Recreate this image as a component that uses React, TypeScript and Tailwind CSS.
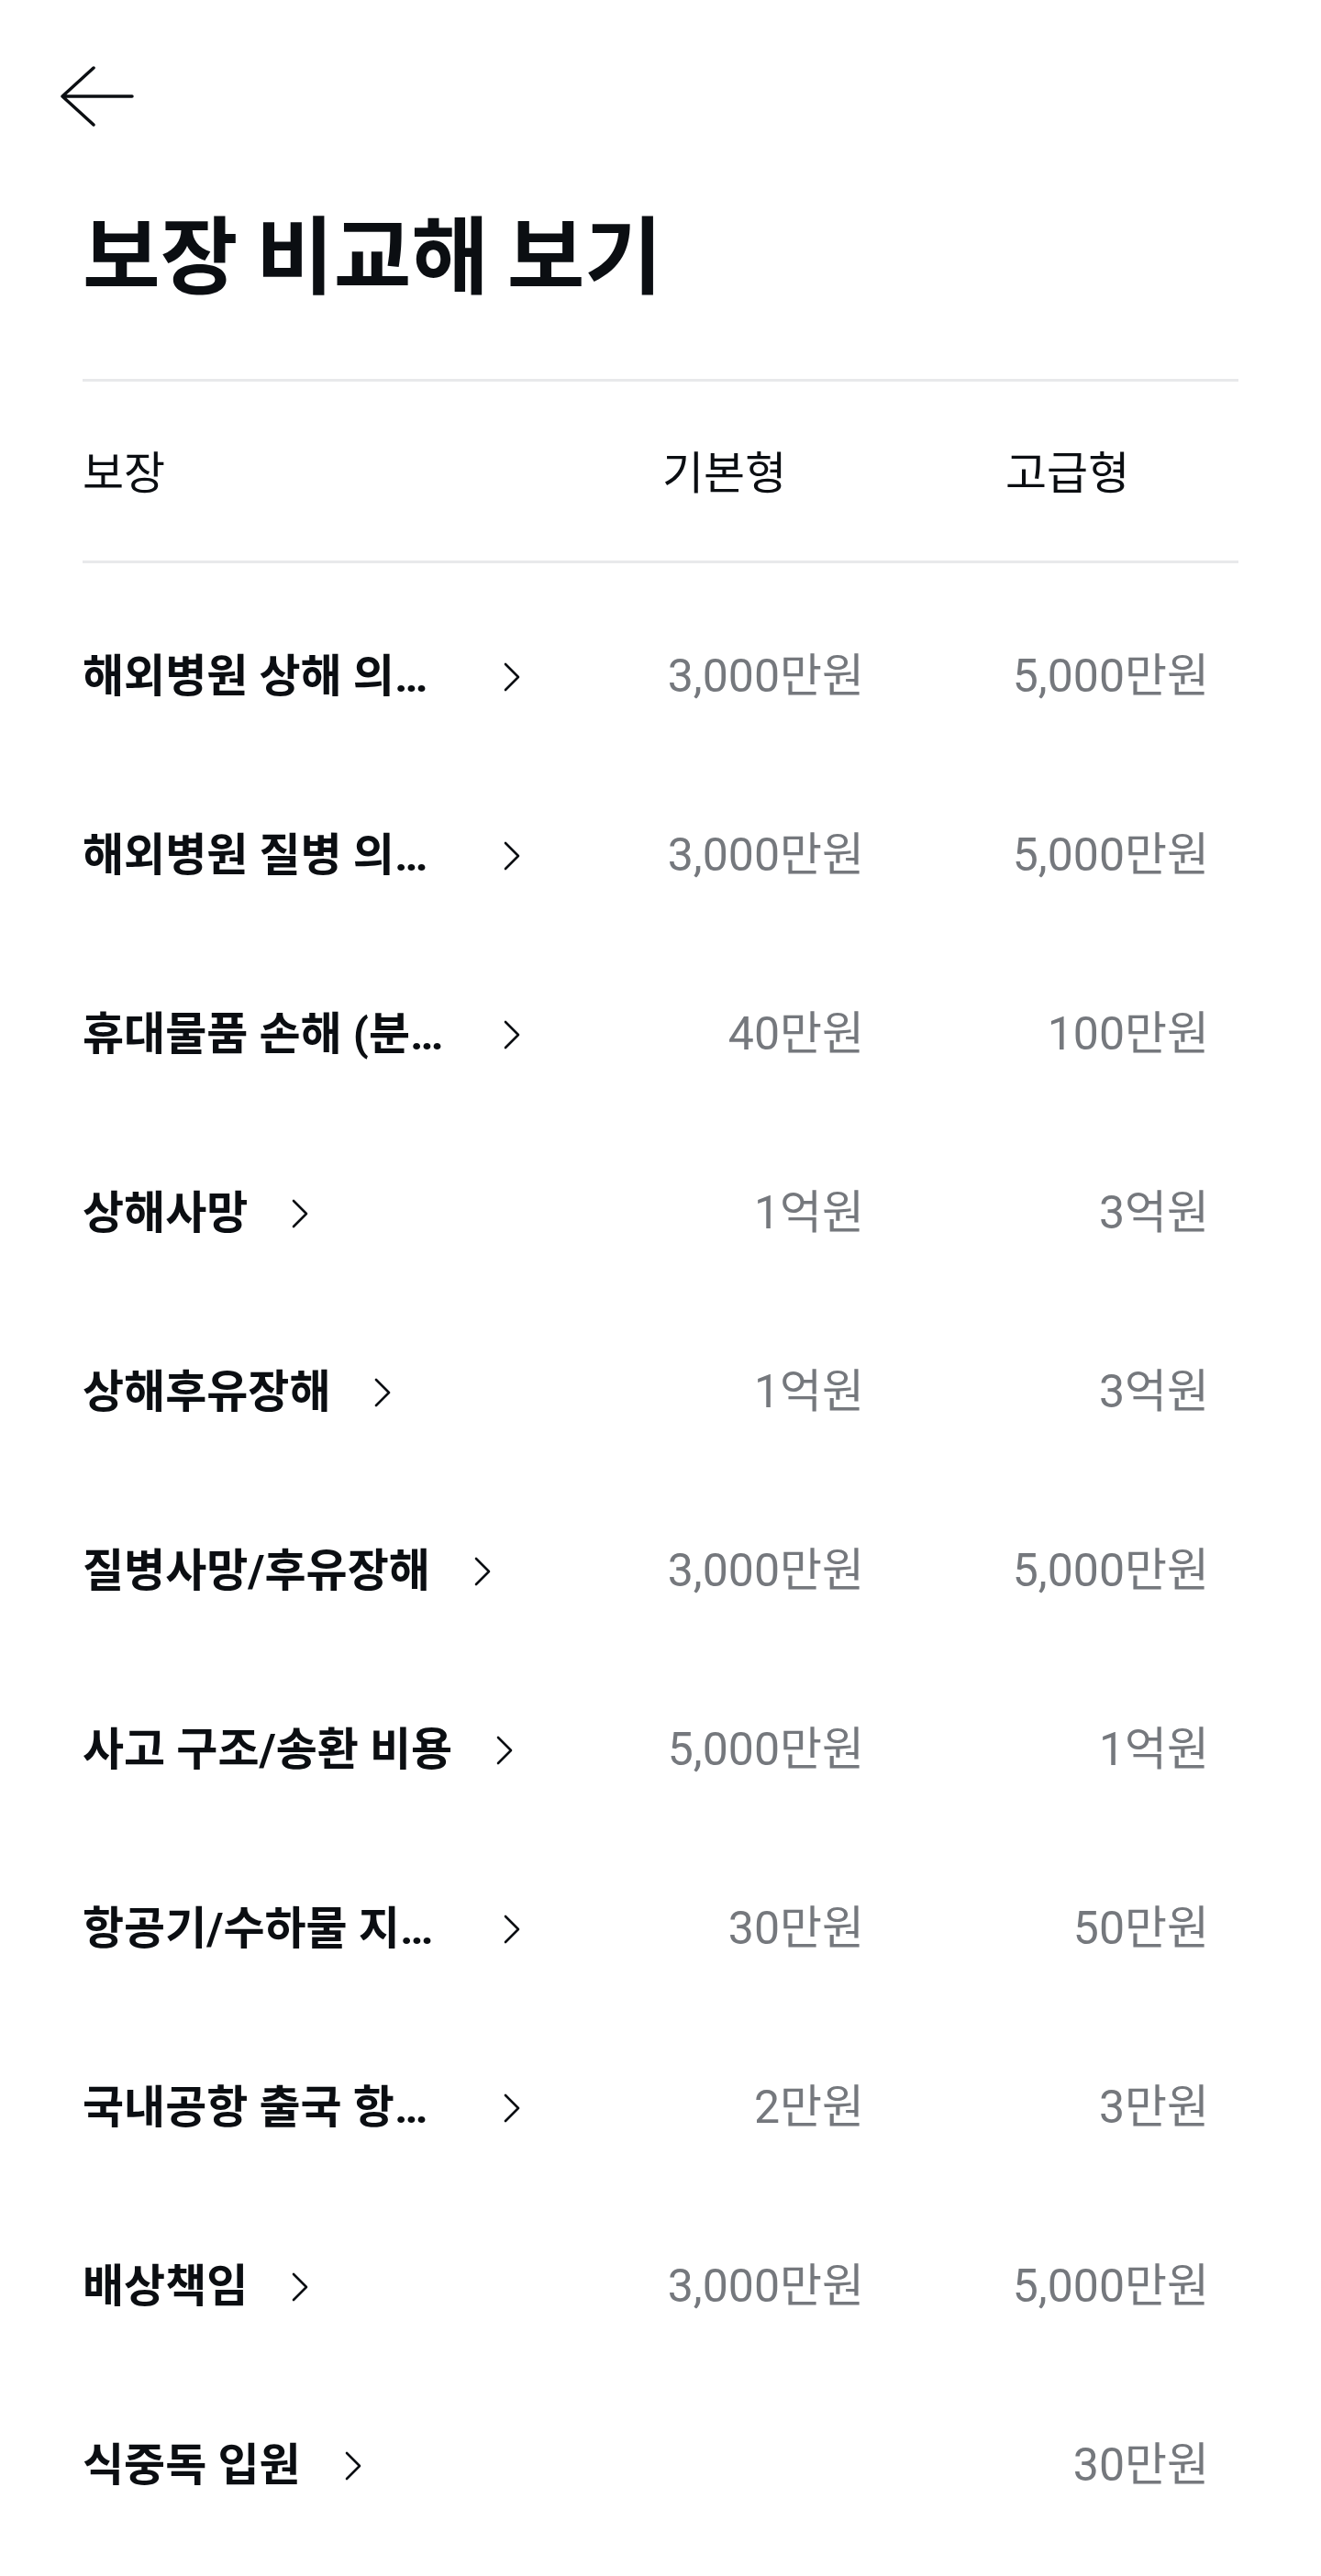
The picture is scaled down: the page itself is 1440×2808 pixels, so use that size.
import React from "react";

type Coverage = {
  name: string;
  basic: string;
  premium: string;
};

const coverages: Coverage[] = [
  { name: "해외병원 상해 의료비", basic: "3,000만원", premium: "5,000만원" },
  { name: "해외병원 질병 의료비", basic: "3,000만원", premium: "5,000만원" },
  { name: "휴대물품 손해 (분실 제외)", basic: "40만원", premium: "100만원" },
  { name: "상해사망", basic: "1억원", premium: "3억원" },
  { name: "상해후유장해", basic: "1억원", premium: "3억원" },
  { name: "질병사망/후유장해", basic: "3,000만원", premium: "5,000만원" },
  { name: "사고 구조/송환 비용", basic: "5,000만원", premium: "1억원" },
  { name: "항공기/수하물 지연 비용", basic: "30만원", premium: "50만원" },
  { name: "국내공항 출국 항공기 지연", basic: "2만원", premium: "3만원" },
  { name: "배상책임", basic: "3,000만원", premium: "5,000만원" },
  { name: "식중독 입원", basic: "", premium: "30만원" },
];

function BackArrow() {
  return (
    <svg width="80" height="66" viewBox="0 0 80 66" fill="none">
      <path
        d="M2 33H78M36 2L2 33L36 64"
        stroke="#0b0e12"
        strokeWidth="3.5"
        strokeLinecap="round"
        strokeLinejoin="round"
      />
    </svg>
  );
}

function Chevron() {
  return (
    <svg width="18" height="32" viewBox="0 0 18 32" fill="none" className="shrink-0">
      <path d="M2 2L16 16L2 30" stroke="#0b0e12" strokeWidth="2.6" strokeLinecap="round" strokeLinejoin="round" />
    </svg>
  );
}

export default function App() {
  return (
    <div lang="ko" className="w-[1440px] min-h-[2808px] bg-white text-[#0b0e12] font-['Roboto','Noto_Sans_CJK_KR',sans-serif]">
      <header className="pl-[66px] pt-[72px]">
        <button className="block">
          <BackArrow />
        </button>
      </header>

      <main className="px-[90px]">
        <h1 className="mt-[89px] text-[92px] leading-none font-bold font-['Noto_Sans_CJK_KR',sans-serif] [word-spacing:-6px]">
          보장 비교해 보기
        </h1>

        <div className="mt-[94px] h-[3px] bg-[#e8e9eb]" />
        <div className="flex h-[195px] items-center pb-[4px] pr-[32px] text-[49px] font-['Noto_Sans_CJK_KR',sans-serif]">
          <div className="flex-1">보장</div>
          <div className="w-[220px]">기본형</div>
          <div className="ml-[154px] w-[222px]">고급형</div>
        </div>
        <div className="h-[3px] bg-[#e8e9eb]" />

        <div className="pt-[26px]">
          {coverages.map((item) => (
            <div key={item.name} className="flex h-[195px] items-center pr-[32px]">
              <div className="flex min-w-0 flex-1 items-center">
                <p className="max-w-[411px] truncate text-[49px] font-bold leading-none py-2">{item.name}</p>
                <span className="ml-[48px]">
                  <Chevron />
                </span>
              </div>
              <div className="w-[220px] text-right text-[50px] text-[#75787d]">{item.basic}</div>
              <div className="ml-[154px] w-[222px] text-right text-[50px] text-[#75787d]">{item.premium}</div>
            </div>
          ))}
        </div>
      </main>
    </div>
  );
}
